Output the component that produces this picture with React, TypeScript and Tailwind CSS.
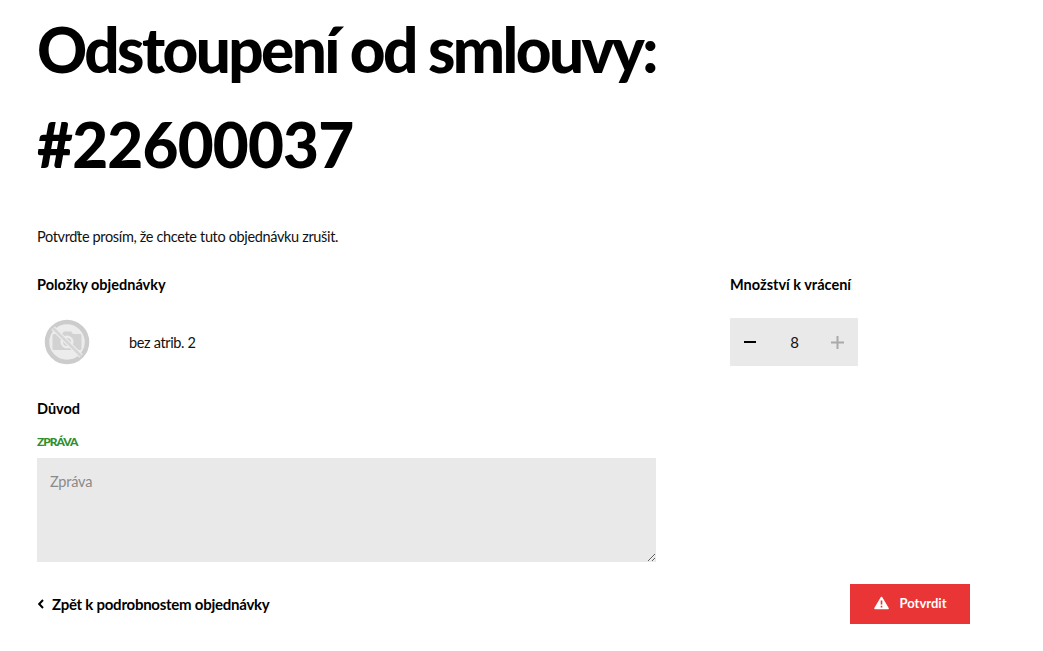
const font = "font-['Lato','Noto_Sans',sans-serif]";

function NoPhotoIcon() {
  return (
    <svg width="46" height="46" viewBox="0 0 46 46" className="shrink-0">
      <circle cx="23" cy="23" r="20" fill="#ececec" stroke="#cccccc" strokeWidth="4.5" />
      <path
        d="M10 15h8l2-2.5h7l2 2.5h7a1.5 1.5 0 0 1 1.5 1.5v13a1.5 1.5 0 0 1-1.5 1.5H10a1.5 1.5 0 0 1-1.5-1.5v-13A1.5 1.5 0 0 1 10 15z"
        fill="#d2d2d2"
      />
      <circle cx="23" cy="23" r="6.5" fill="#ececec" />
      <circle cx="23" cy="23" r="4" fill="#d2d2d2" />
      <path d="M9 9l28 28" stroke="#ececec" strokeWidth="5" />
      <path d="M9 9l28 28" stroke="#d6d6d6" strokeWidth="2.5" />
    </svg>
  );
}

export default function App() {
  return (
    <div className={`${font} min-h-[651px] bg-white text-black`}>
      <div className="pl-[37px] pr-[73px]">
        <h1 className="w-[640px] pt-[2px] text-[62px] leading-[95px] font-black">
          <span className="tracking-[-2.6px]">Odstoupení od smlouvy:</span>
          <br />
          <span className="tracking-[-0.8px]">#22600037</span>
        </h1>

        <p className="mt-[35px] text-[14.5px] leading-[20px] tracking-[-0.35px] text-[#111]">
          Potvrďte prosím, že chcete tuto objednávku zrušit.
        </p>

        <div className="mt-[28px] flex">
          {/* Items column */}
          <div className="w-[693px]">
            <h2 className="text-[14.5px] leading-[20px] font-bold">Položky objednávky</h2>
            <div className="mt-[23px] flex h-[48px] items-center">
              <div className="flex w-[92px] pl-[7px]">
                <NoPhotoIcon />
              </div>
              <span className="pt-[1px] text-[14.5px] tracking-[-0.35px] text-[#111]">bez atrib. 2</span>
            </div>
          </div>

          {/* Quantity column */}
          <div>
            <h2 className="text-[14.5px] leading-[20px] font-bold">Množství k vrácení</h2>
            <div className="mt-[23px] flex h-[48px] w-[128px] items-center justify-between bg-[#e9e9e9] px-[14px]">
              <svg width="12" height="12" viewBox="0 0 12 12">
                <path d="M0 6h12" stroke="#000" strokeWidth="2" />
              </svg>
              <span className="pl-[2px] text-[15px] text-[#111]">8</span>
              <svg width="13" height="13" viewBox="0 0 13 13">
                <path d="M0 6.5h13M6.5 0v13" stroke="#aaa" strokeWidth="2" />
              </svg>
            </div>
          </div>
        </div>

        <h2 className="mt-[33px] text-[14.5px] leading-[20px] font-bold">Důvod</h2>
        <label className="mt-[16px] block text-[12px] leading-[14px] tracking-[-1px] font-black text-[#2f8f2f]">
          ZPRÁVA
        </label>
        <textarea
          placeholder="Zpráva"
          className="mt-[9px] block h-[104px] w-[619px] bg-[#e9e9e9] px-[13px] py-[14px] text-[14.5px] leading-[20px] tracking-[-0.2px] placeholder:text-[#8a8a8a]"
        />

        <div className="mt-[22px] flex items-center justify-between">
          <a href="#" className="flex items-center gap-[9px] pl-[1px] text-[15px] tracking-[-0.25px] font-bold">
            <svg width="6" height="10" viewBox="0 0 6 10" className="-mr-[1px]">
              <path d="M5 1L1.2 5 5 9" fill="none" stroke="#000" strokeWidth="2" />
            </svg>
            Zpět k podrobnostem objednávky
          </a>
          <button className="flex h-[40px] w-[120px] items-center justify-center gap-[11px] bg-[#e93535] text-[13px] font-bold text-white">
            <svg width="15" height="14" viewBox="0 0 15 14" className="mb-[2px]">
              <path d="M7.5 1.5L14 12.5H1z" fill="#fff" stroke="#fff" strokeWidth="1.6" strokeLinejoin="round" />
              <path d="M7.5 4.5v4M7.5 9.8v1.6" stroke="#e93535" strokeWidth="1.6" />
            </svg>
            Potvrdit
          </button>
        </div>
      </div>
    </div>
  );
}
